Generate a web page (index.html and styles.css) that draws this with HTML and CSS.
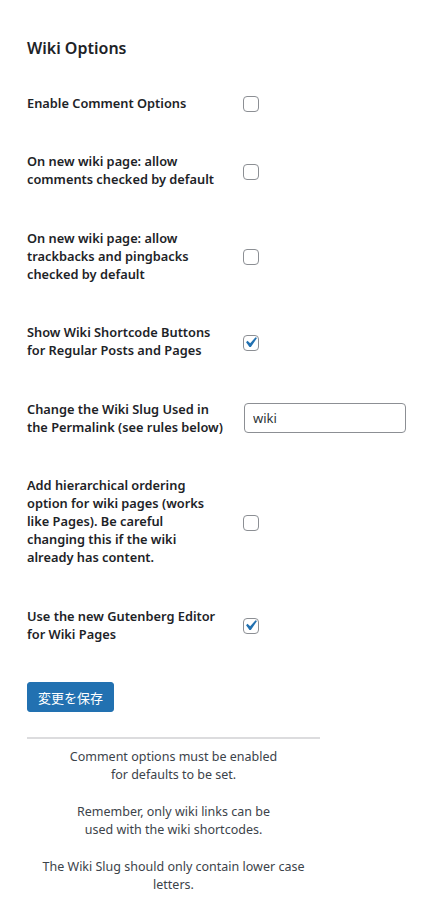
FILE: index.html
```html
<!DOCTYPE html>
<html lang="ja">
<head>
    <meta charset="UTF-8">
    <meta name="viewport" content="width=device-width, initial-scale=1.0">
    <title>Wiki Options</title>
    <link rel="stylesheet" href="styles.css">
</head>
<body>
    <div class="wrap">
        <h2>Wiki Options</h2>
        <form class="form-table">
            <div class="row">
                <label class="th" for="opt1">Enable Comment Options</label>
                <div class="td"><span class="box"><input type="checkbox" id="opt1"></span></div>
            </div>
            <div class="row">
                <label class="th" for="opt2">On new wiki page: allow<br>comments checked by default</label>
                <div class="td"><span class="box"><input type="checkbox" id="opt2"></span></div>
            </div>
            <div class="row">
                <label class="th" for="opt3">On new wiki page: allow<br>trackbacks and pingbacks<br>checked by default</label>
                <div class="td"><span class="box"><input type="checkbox" id="opt3"></span></div>
            </div>
            <div class="row">
                <label class="th" for="opt4">Show Wiki Shortcode Buttons<br>for Regular Posts and Pages</label>
                <div class="td">
                    <span class="box">
                        <input type="checkbox" id="opt4" checked>
                        <svg class="tick" viewBox="0 0 20 20"><path d="M14.83 4.89l1.34.94-5.81 8.38H9.02L5.78 9.67l1.34-1.25 2.57 2.4z"/></svg>
                    </span>
                </div>
            </div>
            <div class="row">
                <label class="th" for="opt5">Change the Wiki Slug Used in<br>the Permalink (see rules below)</label>
                <div class="td"><input type="text" id="opt5" class="text" value="wiki"></div>
            </div>
            <div class="row">
                <label class="th" for="opt6">Add hierarchical ordering<br>option for wiki pages (works<br>like Pages). Be careful<br>changing this if the wiki<br>already has content.</label>
                <div class="td"><span class="box"><input type="checkbox" id="opt6"></span></div>
            </div>
            <div class="row">
                <label class="th" for="opt7">Use the new Gutenberg Editor<br>for Wiki Pages</label>
                <div class="td">
                    <span class="box">
                        <input type="checkbox" id="opt7" checked>
                        <svg class="tick" viewBox="0 0 20 20"><path d="M14.83 4.89l1.34.94-5.81 8.38H9.02L5.78 9.67l1.34-1.25 2.57 2.4z"/></svg>
                    </span>
                </div>
            </div>
            <p class="submit"><button type="button" class="button-primary">変更を保存</button></p>
        </form>
        <div class="notes">
            <p>Comment options must be enabled<br>for defaults to be set.</p>
            <p>Remember, only wiki links can be<br>used with the wiki shortcodes.</p>
            <p>The Wiki Slug should only contain lower case<br>letters.</p>
        </div>
    </div>
</body>
</html>
```

FILE: styles.css
```css
body {
    margin: 0;
    padding: 0;
    background: #fff;
    color: #1d2327;
    font-family: "Noto Sans", "Noto Sans CJK JP", sans-serif;
    font-size: 13px;
}

.wrap {
    padding: 38px 0 0 27px;
}

h2 {
    font-size: 16px;
    font-weight: 600;
    margin: 0 0 15px;
    line-height: 1.3;
}

.row {
    display: grid;
    grid-template-columns: 216px 1fr;
    align-items: center;
}

.th {
    font-size: 12.8px;
    font-weight: 600;
    line-height: 18px;
    padding: 20px 0 20.5px;
    white-space: nowrap;
}

.box {
    position: relative;
    display: inline-block;
    width: 16px;
    height: 16px;
    vertical-align: middle;
}

.box input {
    appearance: none;
    -webkit-appearance: none;
    margin: 0;
    width: 16px;
    height: 16px;
    border: 1px solid #8c8f94;
    border-radius: 4px;
    background: #fff;
    box-sizing: border-box;
    display: block;
}

.tick {
    position: absolute;
    left: -3px;
    top: -3px;
    width: 21px;
    height: 21px;
    fill: #2271b1;
}

.text {
    width: 162px;
    height: 30px;
    margin-left: 1px;
    box-sizing: border-box;
    border: 1px solid #8c8f94;
    border-radius: 4px;
    padding: 0 8px;
    font-family: inherit;
    font-size: 13px;
    color: #2c3338;
}

.submit {
    margin: 19px 0 0;
    padding: 0;
}

.button-primary {
    background: #2271b1;
    color: #fff;
    border: 1px solid #2271b1;
    border-radius: 3px;
    height: 30px;
    padding: 0 10px;
    font-family: "Noto Sans CJK JP", sans-serif;
    font-size: 13px;
    cursor: pointer;
}

.notes {
    width: 293px;
    margin-top: 25px;
    border-top: 2px solid #dcdcde;
    padding-top: 9px;
    text-align: center;
    color: #3c434a;
    font-size: 12.5px;
    line-height: 18px;
}

.notes p {
    margin: 0 0 19px;
}
```
